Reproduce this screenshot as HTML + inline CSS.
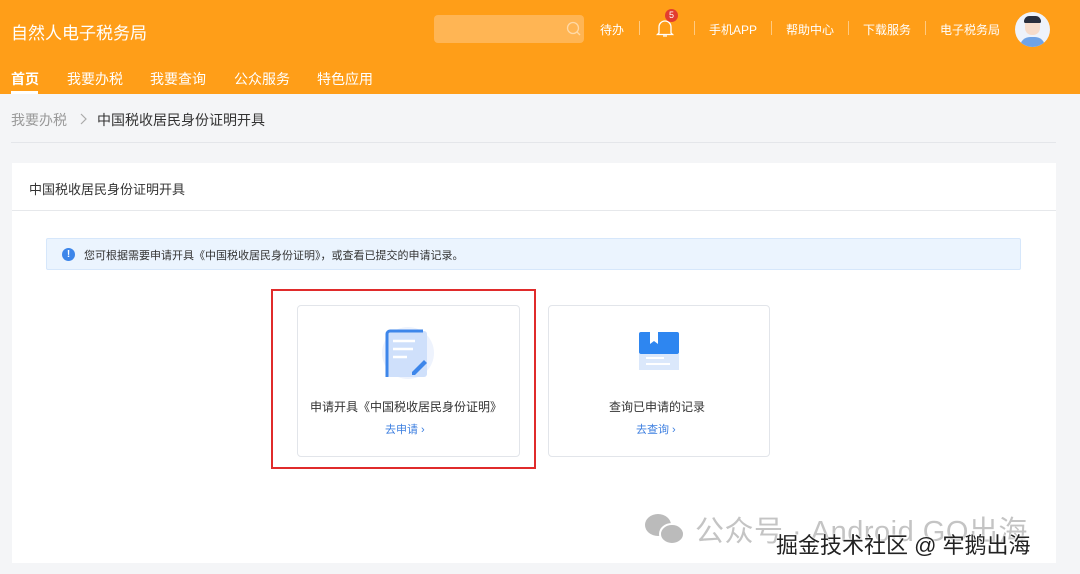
<!DOCTYPE html>
<html><head><meta charset="utf-8"><style>
*{margin:0;padding:0;box-sizing:border-box}
body{width:1080px;height:574px;overflow:hidden;background:#f4f5f7;font-family:"Liberation Sans","Noto Sans CJK SC",sans-serif;position:relative;color:#333}
.hdr{position:absolute;left:0;top:0;width:1080px;height:94px;background:#ff9e18}
.abs{position:absolute;white-space:nowrap}
.w{color:#fff}
.sep{position:absolute;top:21px;width:1px;height:14px;background:rgba(255,255,255,.45)}
.card{position:absolute;background:#fff;border:1px solid #e2e5ea;border-radius:4px}
</style></head><body>
<div class="hdr">
<div class="abs w" style="left:11px;top:19px;font-size:17px">自然人电子税务局</div>
<div class="abs" style="left:434px;top:15px;width:150px;height:28px;border-radius:4px;background:#ffb554"></div>
<svg class="abs" style="left:566px;top:21px" width="16" height="16"><circle cx="7" cy="7" r="5.5" fill="none" stroke="#ffd9a6" stroke-width="1.3"/><path d="M11 11l3 3" stroke="#ffd9a6" stroke-width="1.3"/></svg>
<div class="abs w" style="left:600px;top:21px;font-size:12px">待办</div>
<div class="sep" style="left:639px"></div>
<svg class="abs" style="left:655px;top:17px" width="20" height="22"><path d="M4 16V10a6 6 0 0 1 12 0v6l1.5 1.5h-15z M8 19h4" fill="none" stroke="#fff" stroke-width="1.3"/></svg>
<div class="abs" style="left:665px;top:9px;width:13px;height:13px;border-radius:50%;background:#e33d2f;color:#fff;font-size:9px;text-align:center;line-height:13px">5</div>
<div class="sep" style="left:694px"></div>
<div class="abs w" style="left:709px;top:21px;font-size:12px">手机APP</div>
<div class="sep" style="left:771px"></div>
<div class="abs w" style="left:786px;top:21px;font-size:12px">帮助中心</div>
<div class="sep" style="left:848px"></div>
<div class="abs w" style="left:863px;top:21px;font-size:12px">下载服务</div>
<div class="sep" style="left:925px"></div>
<div class="abs w" style="left:940px;top:21px;font-size:12px">电子税务局</div>
<div class="abs" style="left:1015px;top:12px;width:35px;height:35px;border-radius:50%;background:#eef3fb;overflow:hidden">
<div style="position:absolute;left:10px;top:6px;width:15px;height:17px;border-radius:7px;background:#f6dccb"></div>
<div style="position:absolute;left:9px;top:4px;width:17px;height:7px;border-radius:7px 7px 2px 2px;background:#2a2f3d"></div>
<div style="position:absolute;left:5px;top:25px;width:25px;height:14px;border-radius:10px 10px 0 0;background:#6fa3e6"></div></div>
<div class="abs w" style="left:11px;top:69px;font-size:14px;font-weight:bold">首页</div>
<div class="abs" style="left:11px;top:91px;width:27px;height:3px;background:#fff"></div>
<div class="abs w" style="left:67px;top:69px;font-size:14px">我要办税</div>
<div class="abs w" style="left:150px;top:69px;font-size:14px">我要查询</div>
<div class="abs w" style="left:234px;top:69px;font-size:14px">公众服务</div>
<div class="abs w" style="left:317px;top:69px;font-size:14px">特色应用</div>
</div>
<div class="abs" style="left:11px;top:110px;font-size:14px;color:#999">我要办税</div>
<svg class="abs" style="left:79px;top:113px" width="10" height="12"><path d="M2 1l5 5-5 5" fill="none" stroke="#aaa" stroke-width="1.2"/></svg>
<div class="abs" style="left:97px;top:110px;font-size:14px;color:#333">中国税收居民身份证明开具</div>
<div class="abs" style="left:11px;top:142px;width:1045px;height:1px;background:#e4e6ea"></div>
<div class="abs" style="left:12px;top:163px;width:1044px;height:400px;background:#fff"></div>
<div class="abs" style="left:29px;top:179px;font-size:13px;color:#333">中国税收居民身份证明开具</div>
<div class="abs" style="left:12px;top:210px;width:1044px;height:1px;background:#e6e8eb"></div>
<div class="abs" style="left:46px;top:238px;width:975px;height:32px;background:#ebf4fe;border:1px solid #d6e7fb;border-radius:2px"></div>
<div class="abs" style="left:62px;top:248px;width:13px;height:13px;border-radius:50%;background:#3d86ea;color:#fff;font-size:10px;text-align:center;line-height:13px;font-weight:bold">!</div>
<div class="abs" style="left:84px;top:247px;font-size:11px;color:#333">您可根据需要申请开具《中国税收居民身份证明》，或查看已提交的申请记录。</div>
<div class="card" style="left:297px;top:305px;width:223px;height:152px"></div>
<div class="card" style="left:548px;top:305px;width:222px;height:152px"></div>
<div class="abs" style="left:271px;top:289px;width:265px;height:180px;border:2px solid #e02b2b"></div>
<svg class="abs" style="left:378px;top:322px" width="60" height="60"><circle cx="30" cy="31" r="26" fill="#eef3fd"/><rect x="9" y="9" width="40" height="46" rx="3" fill="#cfe0fb"/><path d="M9 55V12a3 3 0 0 1 3-3h33" fill="none" stroke="#3d86ea" stroke-width="3"/><path d="M15 19h22M15 27h20M15 35h14" stroke="#fff" stroke-width="2.5"/><path d="M34 50l12-12 3 3-12 12h-3z" fill="#3d86ea"/></svg>
<svg class="abs" style="left:636px;top:330px" width="46" height="46"><rect x="3" y="2" width="40" height="22" rx="2" fill="#2e86f0"/><rect x="3" y="24" width="40" height="16" fill="#dbe8fb"/><path d="M14 2v12l4-3 4 3V2z" fill="#fff"/><path d="M10 28h18M10 34h24" stroke="#fff" stroke-width="2"/></svg>
<div class="abs" style="left:310px;top:398px;font-size:12px;color:#333">申请开具《中国税收居民身份证明》</div>
<div class="abs" style="left:385px;top:421px;font-size:11px;color:#3d7fe0">去申请 ›</div>
<div class="abs" style="left:609px;top:398px;font-size:12px;color:#333">查询已申请的记录</div>
<div class="abs" style="left:636px;top:421px;font-size:11px;color:#3d7fe0">去查询 ›</div>
<svg class="abs" style="left:643px;top:511px" width="44" height="36"><ellipse cx="15" cy="14" rx="13" ry="11" fill="#bbb"/><ellipse cx="29" cy="23" rx="12" ry="10" fill="#bbb" stroke="#fff" stroke-width="2"/></svg>
<div class="abs" style="left:695px;top:508px;font-size:29px;color:#c4c4c4;letter-spacing:0.5px">公众号 · Android GO出海</div>
<div class="abs" style="left:776px;top:528px;font-size:22px;color:#222;text-shadow:0 0 2px #fff,0 0 2px #fff">掘金技术社区 @ 牢鹅出海</div>
</body></html>
